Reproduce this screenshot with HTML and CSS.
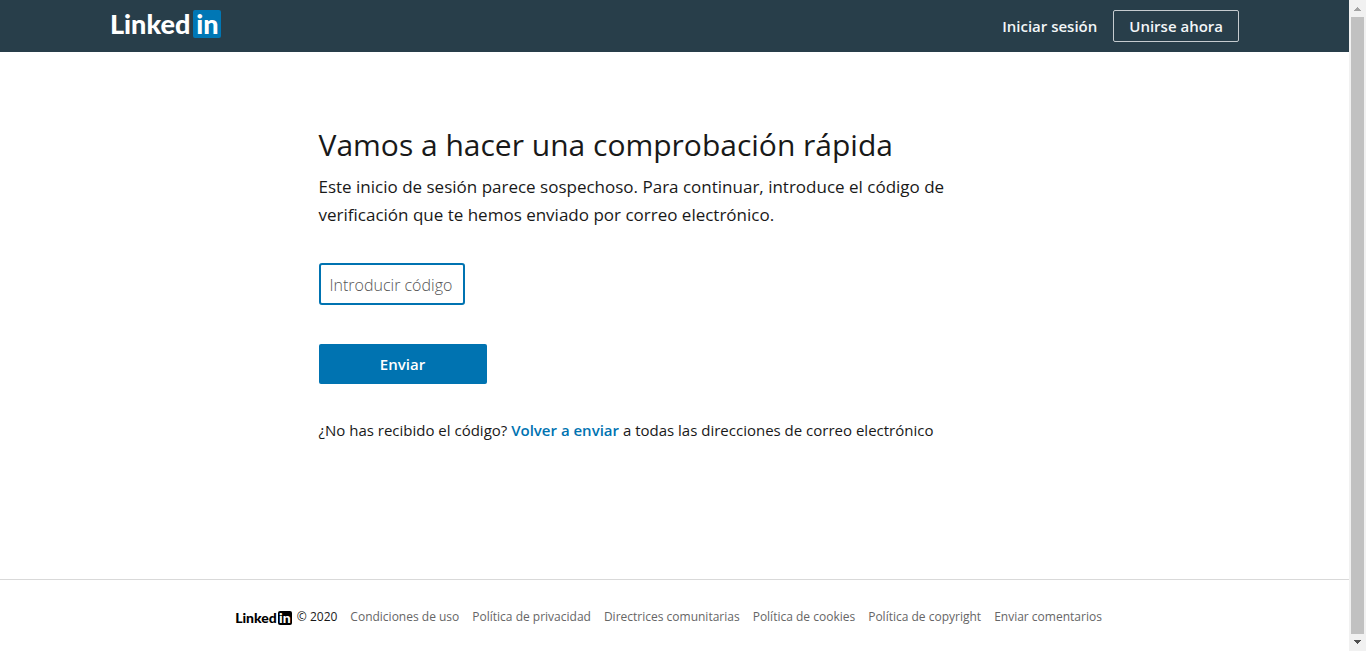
FILE: index.html
```html
<!DOCTYPE html>
<html lang="es">
<head>
<meta charset="utf-8">
<meta name="viewport" content="width=device-width, initial-scale=1">
<title>Verificación de seguridad | LinkedIn</title>
<link rel="stylesheet" href="styles.css">
</head>
<body>
<div class="page">
  <header class="header">
    <div class="header-inner">
      <a class="logo" href="#" aria-label="LinkedIn"><span class="logo-word">Linked</span><span class="logo-box">in</span></a>
      <nav class="header-nav">
        <a class="sign-in" href="#">Iniciar sesión</a>
        <a class="join" href="#">Unirse ahora</a>
      </nav>
    </div>
  </header>
  <main class="main">
    <h1 class="title">Vamos a hacer una comprobación rápida</h1>
    <p class="intro">Este inicio de sesión parece sospechoso. Para continuar, introduce el código de verificación que te hemos enviado por correo electrónico.</p>
    <form class="form">
      <input class="code" type="text" aria-label="Introducir código" placeholder="Introducir código">
      <button class="submit" type="submit">Enviar</button>
    </form>
    <p class="resend">¿No has recibido el código? <a class="resend-link" href="#">Volver a enviar</a> a todas las direcciones de correo electrónico</p>
  </main>
  <footer class="footer">
    <div class="copyright"><span class="logo logo-small"><span class="logo-word">Linked</span><span class="logo-box">in</span></span><span>© 2020</span></div>
    <a class="footer-link" href="#">Condiciones de uso</a>
    <a class="footer-link" href="#">Política de privacidad</a>
    <a class="footer-link" href="#">Directrices comunitarias</a>
    <a class="footer-link" href="#">Política de cookies</a>
    <a class="footer-link" href="#">Política de copyright</a>
    <a class="footer-link" href="#">Enviar comentarios</a>
  </footer>
</div>
<div class="scrollbar" aria-hidden="true">
  <svg class="arrow" viewBox="0 0 17 17"><path d="M8 7h1v1h1v1h1v1h1v1H5v-1h1V9h1V8h1z" fill="#a3a3a3"/></svg>
  <div class="thumb"></div>
  <svg class="arrow" viewBox="0 0 17 17"><path d="M5 6h7v1h-1v1h-1v1H9v1H8V9H7V8H6V7H5z" fill="#505050"/></svg>
</div>
</body>
</html>
```
FILE: styles.css
```css
* { box-sizing: border-box; }

body {
  margin: 0;
  min-height: 100vh;
  display: flex;
  background: #fff;
  color: #191919;
  font-family: "Open Sans", "Noto Sans", sans-serif;
  font-size: 15px;
}

a { color: inherit; text-decoration: none; }

.page {
  flex: 1;
  min-width: 0;
  display: flex;
  flex-direction: column;
}

.header {
  background: #283e4a;
  padding: 0 16px;
}

.header-inner {
  max-width: 1129px;
  height: 52px;
  margin: 0 auto;
  display: flex;
  align-items: center;
  justify-content: space-between;
}

.logo {
  display: flex;
  align-items: center;
  gap: 3px;
  padding-bottom: 4px;
  font-family: Lato, sans-serif;
  font-weight: 900;
  font-size: 27px;
  line-height: 28px;
  color: #fff;
}

.logo-box {
  width: 28px;
  border-radius: 2px;
  background: #0077b5;
  text-align: center;
}

.header-nav {
  display: flex;
  align-items: center;
  gap: 16px;
  color: #f3f6f8;
  font-weight: 600;
}

.join {
  padding: 0 15px;
  border: 1px solid #c5cbcf;
  border-radius: 2px;
  line-height: 30px;
}

.main {
  flex: 1;
  width: 100%;
  max-width: 712px;
  margin: 0 auto;
  padding-top: 71px;
}

.title {
  margin: 0;
  font-size: 30px;
  line-height: 44px;
  font-weight: 400;
}

.intro {
  margin: 6px 0 0;
  font-size: 17px;
  line-height: 28px;
}

.form {
  display: flex;
  flex-direction: column;
  align-items: flex-start;
  gap: 39px;
  margin-top: 34px;
}

.code {
  width: 146px;
  height: 42px;
  padding: 2px 9px 0;
  border: 2px solid #0073b1;
  border-radius: 3px;
  background: #fff;
  font: inherit;
  font-size: 16px;
  font-weight: 300;
  outline: none;
}

.code::placeholder { color: #555; opacity: 1; }

.submit {
  width: 168px;
  height: 40px;
  padding: 0;
  border: 0;
  border-radius: 2px;
  background: #0073b1;
  color: #fff;
  font: inherit;
  font-weight: 600;
}

.resend {
  margin: 34px 0 0;
  line-height: 24px;
}

.resend-link { color: #0073b1; font-weight: 600; }

.footer {
  display: flex;
  flex-wrap: wrap;
  align-items: center;
  justify-content: center;
  gap: 13px;
  min-height: 72px;
  padding: 2px 12px 0 0;
  border-top: 1px solid #d9d9d9;
  font-size: 12px;
}

.copyright { display: flex; align-items: center; gap: 5px; }

.logo-small {
  gap: 1px;
  padding: 2px 0 0;
  font-size: 14px;
  line-height: 14px;
  color: #000;
}

.logo-small .logo-box { width: 14px; background: #000; color: #fff; }

.footer-link { color: #666; }

.scrollbar {
  width: 17px;
  display: flex;
  flex-direction: column;
  align-items: center;
  background: #f1f1f1;
}

.arrow { width: 17px; height: 17px; flex: none; }

.thumb { flex: 1; width: 13px; background: #c1c1c1; }
```
